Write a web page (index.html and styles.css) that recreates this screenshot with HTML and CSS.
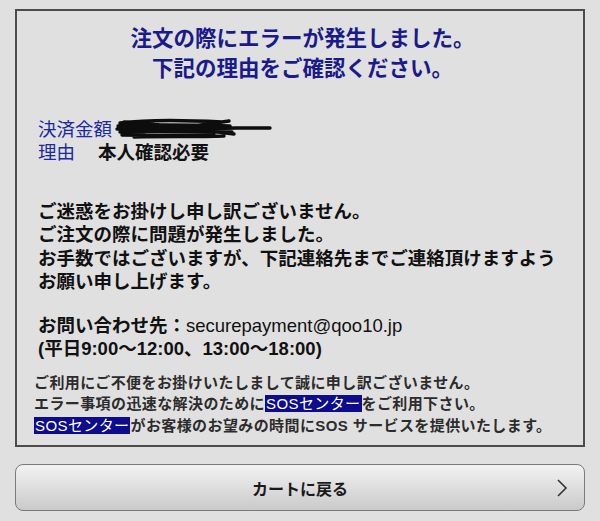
FILE: index.html
```html
<!DOCTYPE html>
<html lang="ja">
<head>
<meta charset="utf-8">
<link rel="stylesheet" href="styles.css">
</head>
<body>
<div class="page">
  <div class="box">
    <div class="title">
      <div>注文の際にエラーが発生しました。</div>
      <div>下記の理由をご確認ください。</div>
    </div>
    <div class="details indent">
      <div class="row"><span class="label">決済金額</span><svg class="scribble" width="160" height="24" viewBox="0 0 160 24"><path d="M6 6 C30 3, 70 3, 108 5 M4 9 C40 7, 80 8, 116 9 M3 12 C40 11, 90 12, 122 11 L156 11 M6 15 C40 14, 80 15, 118 15 M8 18 C30 18, 60 19, 100 18 M10 5 C50 8, 90 13, 120 17 M12 17 C50 13, 90 8, 115 4 M20 20 C50 19, 80 20, 110 19" fill="none" stroke="#0d0d0d" stroke-width="3.4" stroke-linecap="round"/></svg></div>
      <div class="row"><span class="label">理由</span><span class="value">本人確認必要</span></div>
    </div>
    <div class="message indent">
      <div>ご迷惑をお掛けし申し訳ございません。</div>
      <div>ご注文の際に問題が発生しました。</div>
      <div>お手数ではございますが、下記連絡先までご連絡頂けますよう</div>
      <div>お願い申し上げます。</div>
    </div>
    <div class="contact indent">
      <div>お問い合わせ先：<span class="email">securepayment@qoo10.jp</span></div>
      <div>(平日9:00〜12:00、13:00〜18:00)</div>
    </div>
    <div class="notice">
      <div>ご利用にご不便をお掛けいたしまして誠に申し訳ございません。</div>
      <div>エラー事項の迅速な解決のために<span class="hl">SOSセンター</span>をご利用下さい。</div>
      <div><span class="hl">SOSセンター</span>がお客様のお望みの時間にSOS サービスを提供いたします。</div>
    </div>
  </div>
  <div class="button">
    <span class="btn-text">カートに戻る</span>
    <svg class="chevron" width="12" height="20" viewBox="0 0 12 20"><polyline points="2,2 10,10 2,18" fill="none" stroke="#333" stroke-width="1.6"/></svg>
  </div>
</div>
</body>
</html>
```
FILE: styles.css
```css
html, body {
  margin: 0;
  padding: 0;
  background: #e0e0e0;
}
body {
  font-family: "Liberation Sans", "Noto Sans CJK JP", sans-serif;
  color: #111;
}
.page {
  padding: 9px 15px 0;
}
.box {
  border: 2px solid #4c4c4c;
  padding: 13px 12px 9px 17px;
  background: #e0e0e0;
}
.indent {
  padding-left: 4px;
}
.title {
  text-align: center;
  color: #1a1a8a;
  font-weight: bold;
  font-size: 21.5px;
  line-height: 30px;
}
.details {
  margin-top: 34px;
  font-size: 18.5px;
  line-height: 23px;
}
.row {
  display: flex;
  align-items: center;
}
.label {
  color: #1c2aa0;
}
.scribble {
  margin-left: 2px;
  margin-top: -2px;
}
.value {
  font-weight: bold;
  margin-left: 23px;
}
.message {
  margin-top: 36px;
  font-size: 18.5px;
  line-height: 23.4px;
  font-weight: bold;
}
.contact {
  margin-top: 20px;
  font-size: 18.5px;
  line-height: 23px;
  font-weight: bold;
}
.email {
  font-weight: normal;
}
.notice {
  margin-top: 12px;
  font-size: 15px;
  letter-spacing: 0.4px;
  line-height: 21.5px;
  font-weight: bold;
  color: #2c2c2c;
}
.hl {
  background: #0c0c8c;
  color: #fff;
  font-weight: normal;
  padding: 0 1px;
}
.button {
  margin-top: 17px;
  height: 45px;
  border: 1px solid #7a7a7a;
  border-radius: 8px;
  background: linear-gradient(#f2f2f2, #cacaca);
  display: flex;
  align-items: center;
  justify-content: center;
  position: relative;
}
.btn-text {
  font-size: 16px;
  font-weight: bold;
  color: #1a1a1a;
}
.chevron {
  position: absolute;
  right: 16px;
  top: 13px;
}
```
